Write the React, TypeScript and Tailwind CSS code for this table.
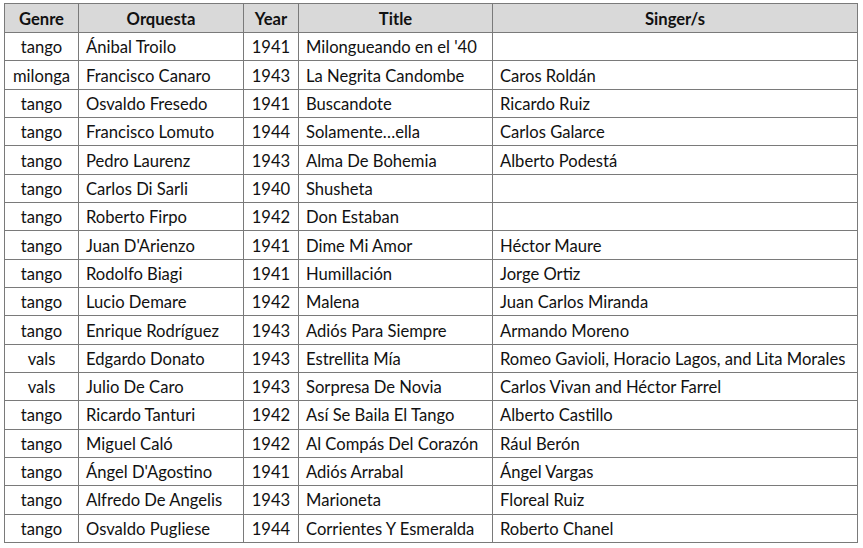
const rows: [string, string, string, string, string][] = [
  ["tango", "Ánibal Troilo", "1941", "Milongueando en el '40", ""],
  ["milonga", "Francisco Canaro", "1943", "La Negrita Candombe", "Caros Roldán"],
  ["tango", "Osvaldo Fresedo", "1941", "Buscandote", "Ricardo Ruiz"],
  ["tango", "Francisco Lomuto", "1944", "Solamente…ella", "Carlos Galarce"],
  ["tango", "Pedro Laurenz", "1943", "Alma De Bohemia", "Alberto Podestá"],
  ["tango", "Carlos Di Sarli", "1940", "Shusheta", ""],
  ["tango", "Roberto Firpo", "1942", "Don Estaban", ""],
  ["tango", "Juan D'Arienzo", "1941", "Dime Mi Amor", "Héctor Maure"],
  ["tango", "Rodolfo Biagi", "1941", "Humillación", "Jorge Ortiz"],
  ["tango", "Lucio Demare", "1942", "Malena", "Juan Carlos Miranda"],
  ["tango", "Enrique Rodríguez", "1943", "Adiós Para Siempre", "Armando Moreno"],
  ["vals", "Edgardo Donato", "1943", "Estrellita Mía", "Romeo Gavioli, Horacio Lagos, and Lita Morales"],
  ["vals", "Julio De Caro", "1943", "Sorpresa De Novia", "Carlos Vivan and Héctor Farrel"],
  ["tango", "Ricardo Tanturi", "1942", "Así Se Baila El Tango", "Alberto Castillo"],
  ["tango", "Miguel Caló", "1942", "Al Compás Del Corazón", "Rául Berón"],
  ["tango", "Ángel D'Agostino", "1941", "Adiós Arrabal", "Ángel Vargas"],
  ["tango", "Alfredo De Angelis", "1943", "Marioneta", "Floreal Ruiz"],
  ["tango", "Osvaldo Pugliese", "1944", "Corrientes Y Esmeralda", "Roberto Chanel"],
];

const headers = ["Genre", "Orquesta", "Year", "Title", "Singer/s"];

export default function App() {
  return (
    <div className="w-[863px] h-[548px] bg-white pt-[3px] pl-[4px] font-['Lato',sans-serif] text-[16.6px] text-[#111]">
      <div className="grid grid-cols-[74px_165px_55px_194px_365px] grid-rows-[29px_repeat(18,28.33px)] w-[854px] border-l border-t border-[#7a7a7a]">
        {headers.map((h) => (
          <div
            key={h}
            className="bg-[#d9d9d9] border-r border-b border-[#7a7a7a] flex items-center justify-center pt-[2px] font-bold"
          >
            {h}
          </div>
        ))}
        {rows.map((r, i) =>
          r.map((c, j) => (
            <div
              key={i + "-" + j}
              className={
                "border-r border-b border-[#7a7a7a] flex items-center pt-[2px] whitespace-nowrap " +
                (j === 0 || j === 2 ? "justify-center" : "pl-[7px]")
              }
            >
              {c}
            </div>
          ))
        )}
      </div>
    </div>
  );
}
